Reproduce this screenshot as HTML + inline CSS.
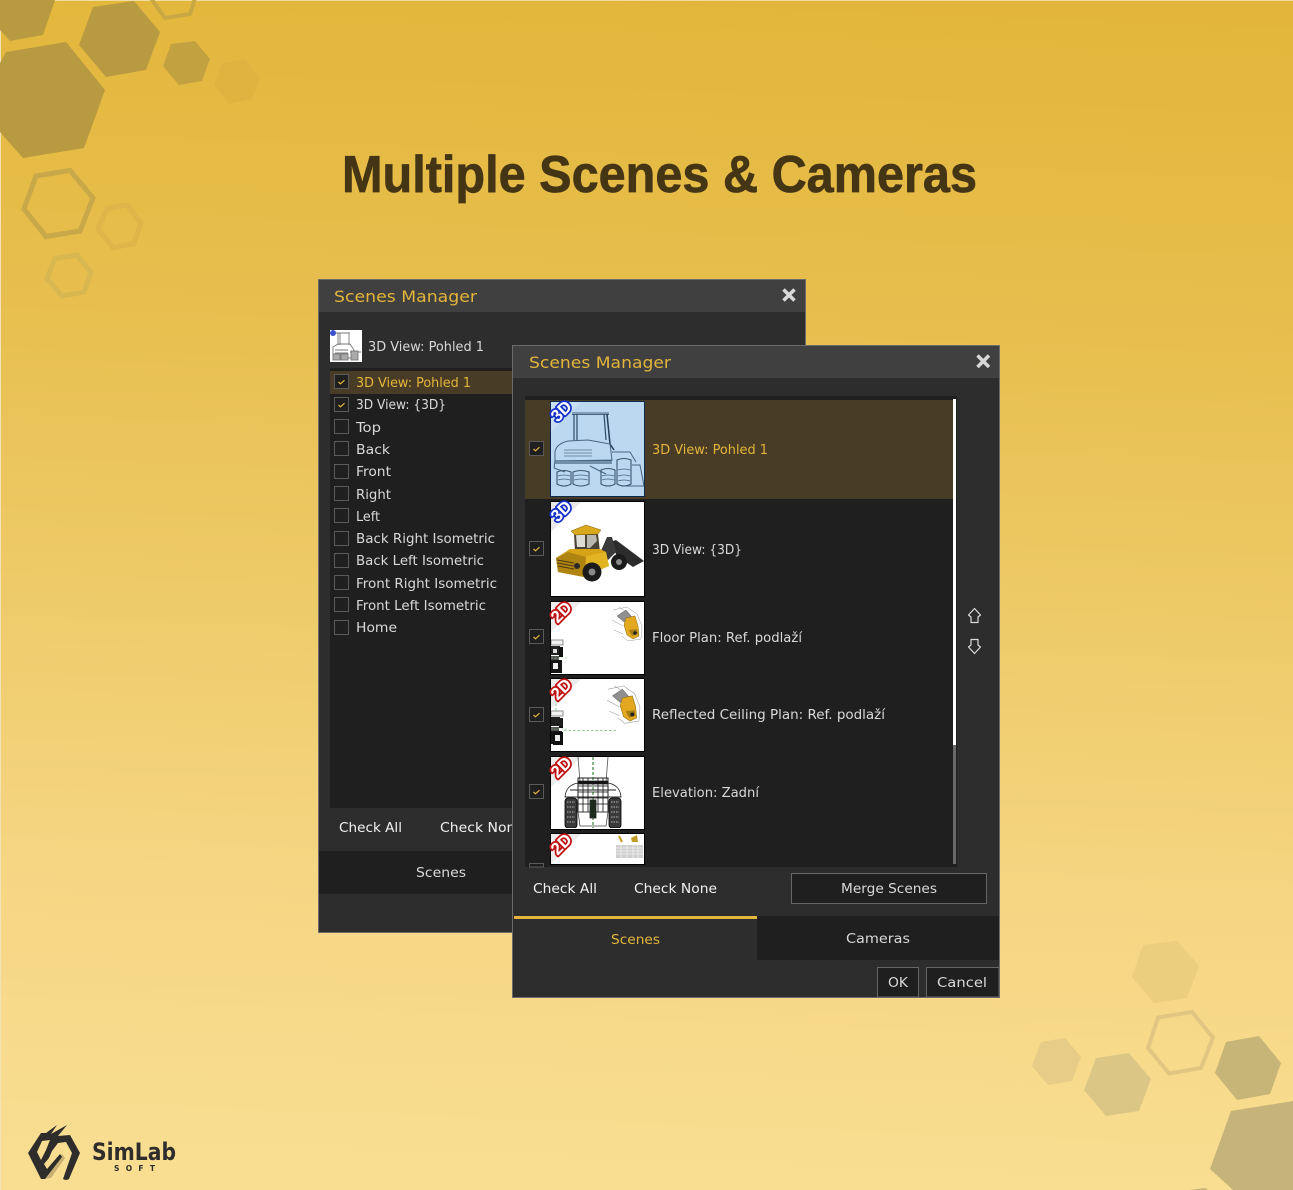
<!DOCTYPE html>
<html><head><meta charset="utf-8"><title>Multiple Scenes &amp; Cameras</title>
<style>
html,body{margin:0;padding:0;background:#e8bd45}
svg{display:block;position:absolute;left:0;top:0}
.t{font-family:"DejaVu Sans","Liberation Sans",sans-serif;font-size:13px;fill:#d9d9d9}
.w{fill:#f2f2f2}
.g{fill:#e3b53a}
</style></head><body>
<svg width="1293" height="1190" viewBox="0 0 1293 1190" xmlns="http://www.w3.org/2000/svg">
<defs>
<linearGradient id="bg" x1="0.52" y1="0" x2="0.48" y2="1"><stop offset="0" stop-color="#e3b63b"/><stop offset="0.3" stop-color="#e8c051"/><stop offset="0.75" stop-color="#f5d683"/><stop offset="1" stop-color="#f9de92"/></linearGradient>
<clipPath id="c1"><rect x="551" y="402" width="93" height="94"/></clipPath>
<clipPath id="c2"><rect x="551" y="502" width="93" height="93"/></clipPath>
<clipPath id="c3"><rect x="551" y="602" width="93" height="71"/></clipPath>
<clipPath id="c4"><rect x="551" y="679" width="93" height="71"/></clipPath>
<clipPath id="c5"><rect x="551" y="757" width="93" height="71"/></clipPath>
<clipPath id="c6"><rect x="551" y="834" width="93" height="30"/></clipPath>
<clipPath id="cb"><rect x="330" y="330" width="32" height="32"/></clipPath>
<g id="ck"><rect x="0.5" y="0.5" width="14" height="14" fill="#1f1f1f" stroke="#5a5a5a"/><path d="M4.5 8 L6.5 9.8 L10.5 6.2" fill="none" stroke="#e3b53a" stroke-width="1.2"/></g>
<g id="box"><rect x="0.5" y="0.5" width="14" height="14" fill="#1f1f1f" stroke="#5a5a5a"/></g>
<g id="ylw">
<path d="M-15 -12 L-6 -18 L0 -11 L-8 -6 Z" fill="#8f8f8f" stroke="#666" stroke-width=".5"/>
<path d="M-6 -10 L3 -12 L6 -2 L7 8 L1 11 L-5 7 L-8 -3 Z" fill="#e3a81f" stroke="#8a6a10" stroke-width=".5"/>
<path d="M-3 2 L5 1 L6 6 L0 8 Z" fill="#a67d14"/><circle cx="3" cy="5" r="1.800" fill="#222"/>
<path d="M-19 -18 L-5 -21 L5 -14 L10 -2 L9 11 L-4 13 L-10 8 M-20 -8 L-9 -2 M-18 2 L-9 6 M-13 -21 L-7 -17" fill="none" stroke="#999" stroke-width=".5"/>
</g>
<g id="sml">
<rect x="551" y="0" width="12" height="5" fill="#f2f2f2" stroke="#777" stroke-width=".8"/>
<rect x="551" y="6" width="9" height="9" fill="#222"/><rect x="559" y="7" width="4" height="10" fill="#111"/>
<rect x="553" y="9" width="4" height="4" fill="#ddd"/>
<rect x="551" y="16" width="8" height="4" fill="#555"/>
<rect x="551" y="20" width="11" height="13" fill="#151515"/><rect x="553" y="23" width="5" height="6" fill="#eee"/>
<path d="M551 18 H567" stroke="#7fc27f" stroke-width=".6" stroke-dasharray="2 1.500"/>
</g>
</defs>

<rect width="1293" height="1190" fill="url(#bg)"/>
<rect width="1293" height="1" fill="#f0dca0"/><rect width="1" height="1190" fill="#f3e3b8"/>

<!-- hexes top-left -->
<g fill="#b89a41">
<polygon points="0,0 55,0 43,35 10,41 0,30"/>
<polygon points="93,7 134,1 160,32 146,70 106,77 79,45"/>
<polygon points="6,52 66,42 105,90 84,148 23,158 0,132 0,63"/>
</g>
<polygon points="171,44 195,41 210,59 202,81 179,85 163,66" fill="#c2a141"/>
<polygon points="222,63 245,59 260,79 252,99 229,104 214,85" fill="#dfb340"/>
<polyline points="150,-3 165,18 190,14 196,-5" fill="none" stroke="#c9a844" stroke-width="4"/>
<polygon points="36,176 70,170.500 93,198 80,231 46,236.500 24,209" fill="none" stroke="#c9a84a" stroke-width="5"/>
<polygon points="107,208.500 127,205 141,223.500 134,243.500 113,247.500 98,229" fill="none" stroke="#ddb548" stroke-width="5"/>
<polygon points="55,258.500 77,255 91,272.500 84,292 62,296 47,278.500" fill="none" stroke="#d8b650" stroke-width="5"/>

<!-- hexes bottom-right -->
<polygon points="1143,945 1177,941 1199,966 1187,998 1154,1003 1132,977" fill="#ebcf7e"/>
<polygon points="1158,1017.500 1192,1012 1213,1037.500 1201,1068 1169,1073.500 1148,1048" fill="none" stroke="#e0c680" stroke-width="4"/>
<polygon points="1226,1042 1259,1036 1281,1063 1270,1094 1237,1100 1215,1073" fill="#c7b477"/>
<polygon points="1096,1058 1129,1053 1151,1079 1139,1111 1106,1116 1084,1090" fill="#dcc685"/>
<polygon points="1041,1042 1065,1038 1081,1057 1072,1081 1048,1085 1032,1066" fill="#e6cc86"/>
<polygon points="1231,1111 1293,1101 1293,1190 1233,1190 1210,1169" fill="#c6b37a"/>
<polygon points="1190,1190 1205,1188 1208,1190" fill="#c6b37a"/>

<!-- title -->
<text x="342" y="192" textLength="635" lengthAdjust="spacingAndGlyphs" font-family="'Liberation Sans',sans-serif" font-weight="bold" font-size="51.500" fill="#443515" stroke="#443515" stroke-width=".7">Multiple Scenes &amp; Cameras</text>

<!-- back dialog -->
<rect x="318" y="280" width="487" height="652" fill="#2d2d2d"/>
<rect x="318.500" y="279.500" width="487" height="653" fill="none" stroke="#6b6b6b"/>
<rect x="319" y="280" width="486" height="32" fill="#404040"/>
<text class="g" x="334" y="302" textLength="143" lengthAdjust="spacingAndGlyphs" style="font-family:'DejaVu Sans',sans-serif;font-size:16px">Scenes Manager</text>
<path d="M783.500 289.500 L794.500 300.500 M794.500 289.500 L783.500 300.500" stroke="#d8d8d8" stroke-width="3.500"/>
<rect x="330" y="330" width="32" height="32" fill="#fff"/>
<g clip-path="url(#cb)" fill="none" stroke="#777" stroke-width=".9">
<path d="M336 333 H350 M338 333 V345 M340 333 V345 M349 333 V345 M333 347 L338 344 H350 L354 350 V358 H333 Z M335 350 H348 M335 353 H348 M350 352 H361"/>
<rect x="333" y="354" width="7" height="6" fill="#aaa"/><rect x="341" y="354" width="7" height="6" fill="#aaa"/><rect x="351" y="351" width="7" height="9" fill="#aaa"/>
</g>
<circle cx="333" cy="333" r="3" fill="#3b50d0"/>
<text class="t" x="368" y="351" textLength="116" lengthAdjust="spacingAndGlyphs">3D View: Pohled 1</text>

<rect x="330" y="368" width="190" height="440" fill="#1f1f1f"/>
<rect x="330" y="371" width="190" height="23" fill="#493c27"/>
<use href="#ck" x="334" y="374"/><use href="#ck" x="334" y="397"/>
<use href="#box" x="334" y="419"/><use href="#box" x="334" y="441"/><use href="#box" x="334" y="464"/><use href="#box" x="334" y="486"/><use href="#box" x="334" y="508"/><use href="#box" x="334" y="531"/><use href="#box" x="334" y="553"/><use href="#box" x="334" y="575"/><use href="#box" x="334" y="597"/><use href="#box" x="334" y="620"/>
<g>
<text class="t g" x="356" y="387" textLength="115" lengthAdjust="spacingAndGlyphs">3D View: Pohled 1</text>
<text class="t" x="356" y="409" textLength="90" lengthAdjust="spacingAndGlyphs">3D View: {3D}</text>
<text class="t" x="356" y="432" textLength="25" lengthAdjust="spacingAndGlyphs">Top</text>
<text class="t" x="356" y="454" textLength="34" lengthAdjust="spacingAndGlyphs">Back</text>
<text class="t" x="356" y="476" textLength="35" lengthAdjust="spacingAndGlyphs">Front</text>
<text class="t" x="356" y="499" textLength="35" lengthAdjust="spacingAndGlyphs">Right</text>
<text class="t" x="356" y="521" textLength="24" lengthAdjust="spacingAndGlyphs">Left</text>
<text class="t" x="356" y="543" textLength="139" lengthAdjust="spacingAndGlyphs">Back Right Isometric</text>
<text class="t" x="356" y="565" textLength="128" lengthAdjust="spacingAndGlyphs">Back Left Isometric</text>
<text class="t" x="356" y="588" textLength="141" lengthAdjust="spacingAndGlyphs">Front Right Isometric</text>
<text class="t" x="356" y="610" textLength="130" lengthAdjust="spacingAndGlyphs">Front Left Isometric</text>
<text class="t" x="356" y="632" textLength="41" lengthAdjust="spacingAndGlyphs">Home</text>
</g>
<text class="t w" x="339" y="832" textLength="63" lengthAdjust="spacingAndGlyphs">Check All</text>
<text class="t w" x="440" y="832" textLength="84" lengthAdjust="spacingAndGlyphs">Check None</text>
<rect x="319" y="851" width="486" height="43" fill="#1f1f1f"/>
<text class="t" x="416" y="877" textLength="50" lengthAdjust="spacingAndGlyphs">Scenes</text>

<!-- front dialog -->
<rect x="512.500" y="345.500" width="487" height="652" fill="#2d2d2d" stroke="#6b6b6b"/>
<rect x="513" y="346" width="486" height="32" fill="#404040"/>
<text class="g" x="529" y="368" textLength="142" lengthAdjust="spacingAndGlyphs" style="font-family:'DejaVu Sans',sans-serif;font-size:16px">Scenes Manager</text>
<path d="M977.500 355.500 L989 367 M989 355.500 L977.500 367" stroke="#d8d8d8" stroke-width="3.500"/>

<rect x="525" y="396" width="432" height="471" fill="#1f1f1f"/>
<rect x="525" y="400" width="428" height="99" fill="#493c27"/>
<rect x="953" y="399" width="3" height="346" fill="#fff"/>
<rect x="953" y="745" width="3" height="119" fill="#6a6a6a"/>

<use href="#ck" x="529" y="441"/><use href="#ck" x="529" y="541"/><use href="#ck" x="529" y="629"/><use href="#ck" x="529" y="707"/><use href="#ck" x="529" y="784"/>
<rect x="529.500" y="863.500" width="14" height="3.500" fill="#1f1f1f" stroke="#5a5a5a"/>

<!-- thumb 1 -->
<rect x="550.500" y="401.500" width="94" height="95" fill="#bcd8f0" stroke="#0e2a4e"/>
<polygon points="551,402 581,402 551,432" fill="#c9e0f4"/>
<g clip-path="url(#c1)" fill="none" stroke="#47657f" stroke-width="1">
<path d="M572 413 H609 M572 414.500 H609" stroke="#47657f"/>
<path d="M574 414 L574 440 M577 414 L577 440 M604 414 L606 440" stroke="#2c4a66" stroke-width="1.200"/>
<path d="M607 414 L610 444 L614 450" stroke="#24405a" stroke-width="1.500"/>
<path d="M555 452 Q556 444 568 441 L588 440 L610 444 L612 460 L555 461 Z"/>
<path d="M564 450 H592 M564 453 H592 M564 456 H592" stroke="#6f8ba3"/>
<path d="M555 461 H612 M555 463 H612" stroke-width="1.200"/>
<path d="M554 468 L555 461 M554 468 L565 472 M590 466 L606 474 M612 452 L630 452 L636 462"/>
<path d="M632 465 L640 465 L644 486 L622 486"/>
<g stroke="#3a566e" stroke-width="1.100">
<path d="M557 472 Q564 469 571 472 V484 Q564 488 557 484 Z"/>
<path d="M573 472 Q581 469 589 472 V484 Q581 488 573 484 Z"/>
<path d="M601 470 Q608 467 615 470 V484 Q608 488 601 484 Z"/>
<path d="M617 460 Q624 457 631 460 V484 Q624 488 617 484 Z"/>
</g>
<path d="M558 476 Q564 474 570 476 M558 480 Q564 478 570 480 M574 476 Q581 474 588 476 M574 480 Q581 478 588 480 M602 476 Q608 474 614 476 M602 480 Q608 478 614 480 M618 470 Q624 468 630 470 M618 476 Q624 474 630 476 M618 481 Q624 479 630 481" stroke-width=".8"/>
</g>

<!-- thumb 2 -->
<rect x="550.500" y="501.500" width="94" height="95" fill="#fff" stroke="#000"/>
<polygon points="551,502 581,502 551,532" fill="#e8e8e8"/>
<g clip-path="url(#c2)">
<path d="M610 542 L616 540 L644 561 L633 567 L617 556 Z" fill="#2c2c2c"/>
<path d="M600 553 L607 537 L612 537 L616 552 L608 560 Z" fill="#3a3a3a"/>
<path d="M574 534 L598 534 L600 552 L575 552 Z" fill="#4a4436"/>
<path d="M576 535 L585 535 L585 547 L577 547 Z" fill="#dcdcd4"/>
<path d="M587 535 L596 535 L597 541 L590 548 L587 548 Z" fill="#b8b8ae"/>
<path d="M571 531 L586 525 L601 530 L598 534 L575 535 Z" fill="#d9a81c" stroke="#7f6210" stroke-width=".5"/>
<path d="M556 558 L570 549 L600 549 L606 552 L609 566 L584 577 L558 572 Z" fill="#d6a316"/>
<path d="M556 558 L568 552 L586 557 L584 577 L558 572 Z" fill="#b08410"/>
<path d="M557 560 L574 563 M557 563 L574 566 M558 566 L574 569" stroke="#4a3a10" stroke-width="1"/>
<path d="M586 556 L606 552 L609 566 L586 574 Z" fill="#e2b424"/>
<circle cx="577" cy="566" r="3" fill="#2a2a2a"/>
<circle cx="592" cy="572" r="9.500" fill="#1b1b1b"/><circle cx="592" cy="572" r="3.500" fill="#8a8a8a"/>
<circle cx="619" cy="562" r="8" fill="#1b1b1b"/><circle cx="619" cy="562" r="3" fill="#8a8a8a"/>
</g>

<!-- thumb 3 -->
<rect x="550.500" y="601.500" width="94" height="73" fill="#fff" stroke="#000"/>
<polygon points="551,602 581,602 551,632" fill="#ececec"/>
<g clip-path="url(#c3)">
<use href="#ylw" transform="translate(632,628)"/>
<use href="#sml" y="640"/>
</g>

<!-- thumb 4 -->
<rect x="550.500" y="678.500" width="94" height="73" fill="#fff" stroke="#000"/>
<polygon points="551,679 581,679 551,709" fill="#ececec"/>
<g clip-path="url(#c4)">
<path d="M556 690 V712 M564 730.500 H616" stroke="#8fcf8f" stroke-width="1" stroke-dasharray="2.500 2" fill="none"/>
<use href="#ylw" transform="translate(629,709) scale(1.100)"/>
<use href="#sml" y="711"/>
<rect x="551" y="718" width="12" height="8" fill="#1e1e1e"/>
<rect x="553" y="732" width="10" height="13" fill="#111"/>
<rect x="555" y="735" width="5" height="6" fill="#eee"/>
</g>

<!-- thumb 5 -->
<rect x="550.500" y="756.500" width="94" height="73" fill="#fff" stroke="#000"/>
<polygon points="551,757 581,757 551,787" fill="#ececec"/>
<g clip-path="url(#c5)" fill="none" stroke="#222" stroke-width=".8">
<path d="M578 757 L580 782 M608 757 L606 782" stroke="#555"/>
<path d="M593 757 V829" stroke="#3a8a3a" stroke-dasharray="3 2" stroke-width="1.200"/>
<path d="M565 797 Q566 785 578 783 H608 Q620 785 621 797 Z"/>
<path d="M565 797 H621 M570 790 H616" stroke-width="1"/>
<path d="M578 778 H608 V812 H578 Z" stroke-width="1"/>
<path d="M583 778 V812 M588 778 V812 M598 778 V812 M603 778 V812 M578 786 H608 M578 792 H608 M578 798 H608 M578 804 H608" stroke="#111"/>
<path d="M578 781 H608 V784 H578 Z" fill="#111"/>
<rect x="565" y="798" width="12" height="30" rx="3" fill="#3a3a3a" stroke="#000"/>
<rect x="609" y="798" width="12" height="30" rx="3" fill="#3a3a3a" stroke="#000"/>
<path d="M567 802 H575 M567 807 H575 M567 812 H575 M567 817 H575 M567 822 H575 M611 802 H619 M611 807 H619 M611 812 H619 M611 817 H619 M611 822 H619" stroke="#ddd" stroke-dasharray="1.500 1"/>
<path d="M578 812 H608 L606 826 H580 Z" stroke="#444"/>
<rect x="590" y="800" width="6" height="18" fill="#1c2c1c"/>
</g>

<!-- thumb 6 -->
<rect x="550.500" y="833.500" width="94" height="31" fill="#fff" stroke="#000"/>
<polygon points="551,834 581,834 551,864" fill="#ececec"/>
<g clip-path="url(#c6)">
<rect x="616" y="845" width="27" height="13" fill="#cfcfcf"/>
<path d="M616 848 H643 M616 851 H643 M616 854 H643 M621 845 V858 M627 845 V858 M633 845 V858 M638 845 V858" stroke="#f2f2f2" stroke-width=".7"/>
<path d="M619 836 L622 842" stroke="#c99a20" stroke-width="2"/>
<path d="M631 838 L637 835 L638 842 L632 842 Z" fill="#c49a28"/>
</g>

<!-- badges -->
<g style="font-family:'Liberation Sans',sans-serif;font-weight:bold;font-size:17px" text-anchor="middle" stroke-linejoin="round" paint-order="stroke">
<text transform="translate(561,411) rotate(-45)" y="6" fill="#fff" stroke="#1530c8" stroke-width="3.500">3D</text>
<text transform="translate(561,511) rotate(-45)" y="6" fill="#fff" stroke="#1530c8" stroke-width="3.500">3D</text>
<text transform="translate(561,612) rotate(-45)" y="6" fill="#fff" stroke="#c01010" stroke-width="3.500">2D</text>
<text transform="translate(561,689) rotate(-45)" y="6" fill="#fff" stroke="#c01010" stroke-width="3.500">2D</text>
<text transform="translate(561,767) rotate(-45)" y="6" fill="#fff" stroke="#c01010" stroke-width="3.500">2D</text>
<text transform="translate(561,844) rotate(-45)" y="6" fill="#fff" stroke="#c01010" stroke-width="3.500">2D</text>
</g>

<text class="t g" x="652" y="454" textLength="116" lengthAdjust="spacingAndGlyphs">3D View: Pohled 1</text>
<text class="t" x="652" y="554" textLength="90" lengthAdjust="spacingAndGlyphs">3D View: {3D}</text>
<text class="t" x="652" y="642" textLength="150" lengthAdjust="spacingAndGlyphs">Floor Plan: Ref. podlaží</text>
<text class="t" x="652" y="719" textLength="233" lengthAdjust="spacingAndGlyphs">Reflected Ceiling Plan: Ref. podlaží</text>
<text class="t" x="652" y="797" textLength="107" lengthAdjust="spacingAndGlyphs">Elevation: Zadní</text>

<path d="M974.500 608.500 L980.500 615 L978 617 V622.500 H971 V617 L968.500 615 Z" fill="none" stroke="#dcdcdc" stroke-width="1.200" stroke-linejoin="round"/>
<path d="M974.500 653.500 L980.500 647 L978 645 V639.500 H971 V645 L968.500 647 Z" fill="none" stroke="#dcdcdc" stroke-width="1.200" stroke-linejoin="round"/>

<text class="t w" x="533" y="893" textLength="64" lengthAdjust="spacingAndGlyphs">Check All</text>
<text class="t w" x="634" y="893" textLength="83" lengthAdjust="spacingAndGlyphs">Check None</text>
<rect x="791.500" y="873.500" width="195" height="30" fill="#1f1f1f" stroke="#666"/>
<text class="t" x="841" y="893" textLength="96" lengthAdjust="spacingAndGlyphs">Merge Scenes</text>

<rect x="514" y="916" width="243" height="3" fill="#e3b53a"/>
<rect x="757" y="916" width="242" height="44" fill="#1f1f1f"/>
<text class="t g" x="611" y="944" textLength="49" lengthAdjust="spacingAndGlyphs">Scenes</text>
<text class="t" x="846" y="943" textLength="64" lengthAdjust="spacingAndGlyphs">Cameras</text>

<rect x="877.500" y="967.500" width="41" height="29.500" fill="#1f1f1f" stroke="#666"/>
<rect x="926.500" y="967.500" width="72.500" height="29.500" fill="#1f1f1f" stroke="#666"/>
<text class="t" x="888" y="987" textLength="20" lengthAdjust="spacingAndGlyphs">OK</text>
<text class="t" x="937" y="987" textLength="50" lengthAdjust="spacingAndGlyphs">Cancel</text>

<!-- logo -->
<path d="M62 1154 L65 1158 L51 1178 L44 1179 Z" fill="#c9b173"/>
<path d="M41 1133 H46 L57 1125 L51 1134 L67 1125 L58 1136 L70 1135 L80 1153 L69 1179 Q66 1181 63 1179 L72 1153 L66 1142 L58 1143 L52 1151 L49 1158 L44 1164 L47 1169 L60 1154 L62 1157 L45 1179 H41 L28 1153 Z M37 1152 L41 1160 L46 1150 L50 1140 L42 1141 Z" fill="#2e2d2b" fill-rule="evenodd"/>
<text x="92" y="1160" textLength="84" lengthAdjust="spacingAndGlyphs" font-family="'DejaVu Sans',sans-serif" font-weight="bold" font-size="24" fill="#2e2d2b">SimLab</text>
<text x="114" y="1171" textLength="41" font-family="'DejaVu Sans',sans-serif" font-weight="bold" font-size="7.500" fill="#2e2d2b">SOFT</text>
</svg>
</body></html>
